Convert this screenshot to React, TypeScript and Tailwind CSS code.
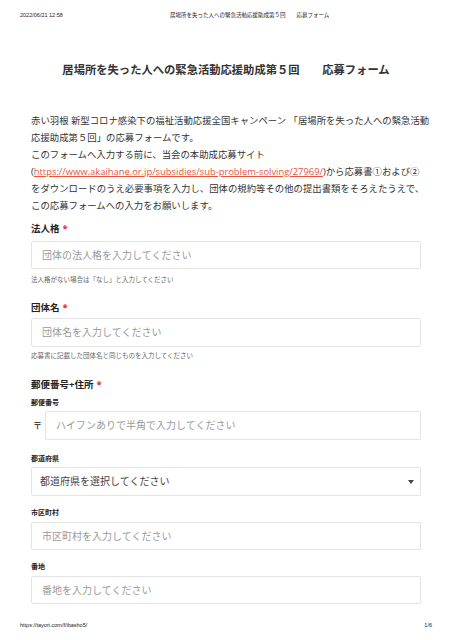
import React from "react";

const jp = { fontFamily: '"Open Sans", "Noto Sans CJK JP", sans-serif' };
const arial = { fontFamily: '"Liberation Sans", "Noto Sans CJK JP", sans-serif' };

function Label({ text, req, small }: { text: string; req?: boolean; small?: boolean }) {
  return (
    <div
      className={
        small
          ? "text-[7px] leading-[10px] font-bold text-[#222] whitespace-nowrap"
          : "text-[9.5px] leading-[14px] font-bold text-[#222] whitespace-nowrap"
      }
    >
      {text}
      {req && <span className="text-[#e0283a] ml-[3px]">*</span>}
    </div>
  );
}

function Input({ placeholder, h = 28 }: { placeholder: string; h?: number }) {
  return (
    <div
      className="border border-[#e4e4e4] rounded-[2px] bg-white flex items-center pl-[10px] text-[10px] text-[#9a9a9a] whitespace-nowrap"
      style={{ height: h }}
    >
      {placeholder}
    </div>
  );
}

function Help({ text }: { text: string }) {
  return <div className="text-[6.5px] leading-[10px] text-[#666] whitespace-nowrap">{text}</div>;
}

export default function App() {
  return (
    <div className="w-[452px] h-[640px] bg-white relative flex flex-col text-[#222]" style={jp}>
      <div className="flex items-center h-[30px] px-[20px] text-[5.5px] text-[#222]" style={arial}>
        <div className="w-[150px]">2022/06/21 12:58</div>
        <div className="whitespace-pre">居場所を失った人への緊急活動応援助成第５回　　応募フォーム</div>
      </div>

      <div className="mt-[32px] text-center text-[11.3px] leading-[16px] font-bold text-[#333] whitespace-pre">
        居場所を失った人への緊急活動応援助成第５回　　応募フォーム
      </div>

      <div className="px-[31px] mt-[34px] text-[9.4px] leading-[17px] text-[#333] whitespace-nowrap">
        <div>赤い羽根 新型コロナ感染下の福祉活動応援全国キャンペーン 「居場所を失った人への緊急活動</div>
        <div>応援助成第５回」の応募フォームです。</div>
        <div>このフォームへ入力する前に、当会の本助成応募サイト</div>
        <div>
          (
          <span className="text-[#e8553c] underline">
            https://www.akaihane.or.jp/subsidies/sub-problem-solving/27969/
          </span>
          )から応募書①および②
        </div>
        <div>をダウンロードのうえ必要事項を入力し、団体の規約等その他の提出書類をそろえたうえで、</div>
        <div>この応募フォームへの入力をお願いします。</div>
      </div>

      <div className="px-[31px]">
        <div className="mt-[8px]">
          <Label text="法人格" req />
        </div>
        <div className="mt-[5px]">
          <Input placeholder="団体の法人格を入力してください" />
        </div>
        <div className="mt-[6px]">
          <Help text="法人格がない場合は「なし」と入力してください" />
        </div>

        <div className="mt-[16px]">
          <Label text="団体名" req />
        </div>
        <div className="mt-[3px]">
          <Input placeholder="団体名を入力してください" h={29} />
        </div>
        <div className="mt-[4px]">
          <Help text="応募書に記載した団体名と同じものを入力してください" />
        </div>

        <div className="mt-[17px]">
          <Label text="郵便番号+住所" req />
        </div>
        <div className="mt-[6px]">
          <Label text="郵便番号" small />
        </div>
        <div className="mt-[3px] flex items-center">
          <div className="w-[14px] text-[9px] font-bold text-[#444] pl-[2px]">〒</div>
          <div className="flex-1">
            <Input placeholder="ハイフンありで半角で入力してください" h={29} />
          </div>
        </div>
        <div className="mt-[14px]">
          <Label text="都道府県" small />
        </div>
        <div className="mt-[3px]">
          <div className="h-[29px] border border-[#e4e4e4] rounded-[2px] flex items-center justify-between pl-[8px] pr-[6px] text-[10px] text-[#444] whitespace-nowrap">
            <span>都道府県を選択してください</span>
            <svg width="6" height="4" viewBox="0 0 6 4">
              <path d="M0 0 L6 0 L3 4 Z" fill="#444" />
            </svg>
          </div>
        </div>
        <div className="mt-[12px]">
          <Label text="市区町村" small />
        </div>
        <div className="mt-[4px]">
          <Input placeholder="市区町村を入力してください" />
        </div>
        <div className="mt-[12px]">
          <Label text="番地" small />
        </div>
        <div className="mt-[4px]">
          <Input placeholder="番地を入力してください" />
        </div>
      </div>

      <div className="absolute left-[20px] right-[20px] bottom-[11px] flex justify-between text-[5.5px] text-[#222]" style={arial}>
        <span>https://tayori.com/f/ibasho5/</span>
        <span>1/6</span>
      </div>
    </div>
  );
}
